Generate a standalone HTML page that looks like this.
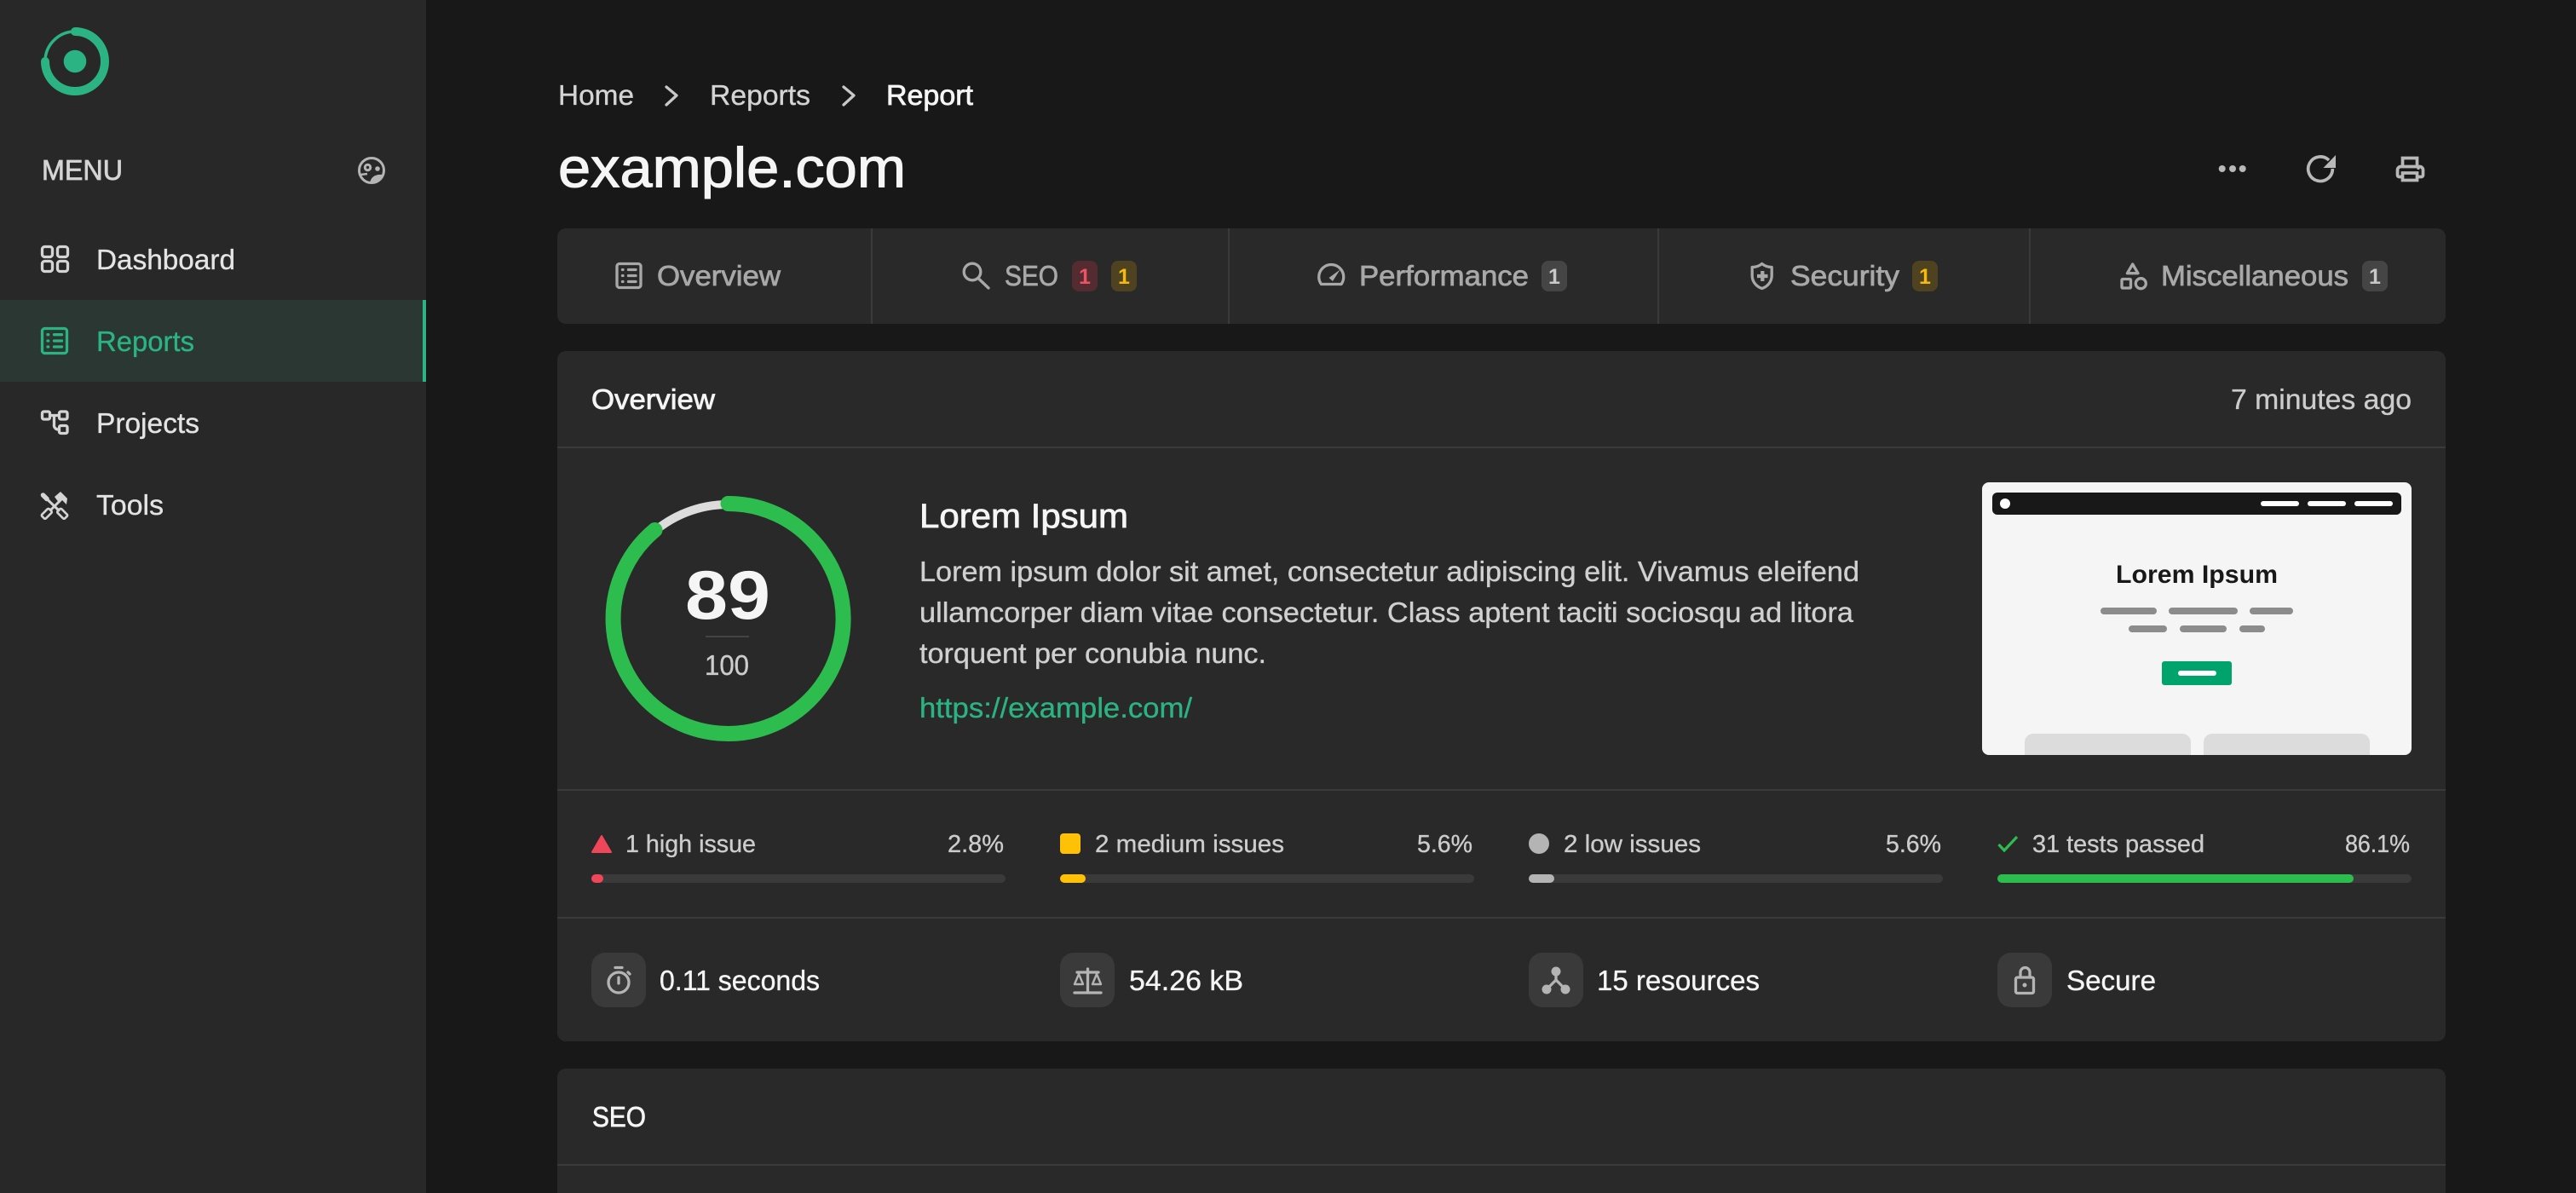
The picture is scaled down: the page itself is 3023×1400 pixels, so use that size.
<!DOCTYPE html>
<html lang="en"><head><meta charset="utf-8"><title>example.com</title>
<style>
html,body{margin:0;padding:0;background:#181818;width:3023px;height:1400px;overflow:hidden}
svg{display:block}
text{font-family:"Liberation Sans",sans-serif;font-size:33px;fill:currentColor;stroke:currentColor;stroke-width:.35px}
text.m{stroke-width:.75px}
text.b{stroke-width:0;font-weight:700}
text.s{font-size:29px}
.i{fill:none;stroke-width:3.3;stroke-linecap:round;stroke-linejoin:round}
</style></head><body>
<svg xmlns="http://www.w3.org/2000/svg" width="3023" height="1400" viewBox="0 0 3023 1400">
<rect width="3023" height="1400" fill="#181818"/>
<!-- Sidebar -->
<rect width="500" height="1400" fill="#282828"/>
<circle cx="88" cy="72" r="13.300" fill="#2bb383"/>
<circle cx="88" cy="72" r="35" fill="none" stroke="#2bb383" stroke-width="3.500"/>
<path d="M88 37A35 35 0 1 1 53 72" fill="none" stroke="#2bb383" stroke-width="10" stroke-linecap="round"/>
<text x="49" y="211" textLength="95" lengthAdjust="spacingAndGlyphs" color="#d4d4d4" class="m">MENU</text>
<g fill="none" stroke="#b4b4b4" stroke-width="3"><circle cx="436" cy="200" r="14.500"/><circle cx="431.500" cy="196.500" r="3.200"/></g>
<circle cx="443" cy="198" r="2.800" fill="#b4b4b4"/><path d="M434 215C435 208 440 204 449 205C449 210 444 215 434 215Z" fill="#b4b4b4"/><path d="M423 205L431 204" stroke="#b4b4b4" stroke-width="2.500"/>
<rect y="352" width="500" height="96" fill="#2a3733"/><rect x="496" y="352" width="4" height="96" fill="#2bb383"/>
<g class="i" stroke="#d4d4d4">
<rect x="49.500" y="289.500" width="12" height="12" rx="3"/><rect x="67.500" y="289.500" width="12" height="12" rx="3"/><rect x="49.500" y="306.500" width="12" height="12" rx="3"/><rect x="67.500" y="306.500" width="12" height="12" rx="3"/>
<rect x="49.500" y="483" width="9" height="9" rx="2"/><rect x="69.500" y="483" width="9.500" height="9" rx="2"/><rect x="69.500" y="499.500" width="9.500" height="9" rx="2"/><path d="M59 487.500H69M63.500 487.500V498A5 5 0 0 0 69 504"/>
</g>
<g class="i" stroke="#2bb383"><rect x="49.500" y="385.500" width="29" height="29" rx="3"/><path d="M63.500 392.700H72.500M63.500 400H72.500M63.500 407H72.500M56 392.700H56.700M56 400H56.700M56 407H56.700"/></g>
<g fill="none" stroke="#d4d4d4" stroke-linecap="round" stroke-linejoin="round">
<path d="M50.500 581L55 585.500" stroke-width="5.500"/><path d="M55 585.500L69 599" stroke-width="3"/><path d="M60 598L70 588" stroke-width="3"/>
<rect x="49" y="599.500" width="12" height="6.500" rx="1.500" transform="rotate(-45 55 603)" stroke-width="2.600"/>
<rect x="67" y="599.500" width="12" height="6.500" rx="1.500" transform="rotate(45 73 603)" stroke-width="2.600"/>
</g>
<path d="M64 583L71 577L79 585L78 592L73 587L69.500 590.500Z" fill="#d4d4d4"/>
<text x="113" y="316" textLength="163" lengthAdjust="spacingAndGlyphs" color="#e4e4e4">Dashboard</text>
<text x="113" y="412" textLength="115" lengthAdjust="spacingAndGlyphs" color="#2bb383">Reports</text>
<text x="113" y="508" textLength="121" lengthAdjust="spacingAndGlyphs" color="#e4e4e4">Projects</text>
<text x="113" y="604" textLength="79" lengthAdjust="spacingAndGlyphs" color="#e4e4e4">Tools</text>
<!-- Header -->
<text x="655" y="123" textLength="89" lengthAdjust="spacingAndGlyphs" color="#d4d4d4">Home</text>
<path d="M782 102L794 112L782 123" fill="none" stroke="#c8c8c8" stroke-width="3.300" stroke-linecap="round" stroke-linejoin="round"/>
<text x="833" y="123" textLength="118" lengthAdjust="spacingAndGlyphs" color="#d4d4d4">Reports</text>
<path d="M990 102L1002 112L990 123" fill="none" stroke="#c8c8c8" stroke-width="3.300" stroke-linecap="round" stroke-linejoin="round"/>
<text x="1040" y="123" textLength="102" lengthAdjust="spacingAndGlyphs" color="#f5f5f5" class="m">Report</text>
<text x="655" y="219.500" textLength="408" lengthAdjust="spacingAndGlyphs" style="font-size:66px;stroke-width:1.1px" color="#f5f5f5">example.com</text>
<g fill="#b8b8b8"><circle cx="2607.700" cy="198" r="4"/><circle cx="2620" cy="198" r="4"/><circle cx="2631.700" cy="198" r="4"/><path d="M2741 182V197H2726.500Z"/><circle cx="2838" cy="197.300" r="1.800"/></g>
<g fill="none" stroke="#b8b8b8" stroke-width="3.700"><path d="M2737.300 198A14.300 14.300 0 1 1 2733 188"/><path d="M2819 207.500H2815.500A2 2 0 0 1 2813.500 205.500V199.500A4 4 0 0 1 2817.500 195.500H2839.500A4 4 0 0 1 2843.500 199.500V205.500A2 2 0 0 1 2841.500 207.500H2838M2819.500 195V185.500H2836.500V195"/><rect x="2819.500" y="203" width="17" height="8.500"/></g>
<!-- Tabs -->
<rect x="654" y="268" width="2216" height="112" rx="10" fill="#292929"/>
<g fill="#3a3a3a"><rect x="1022" y="268" width="2" height="112"/><rect x="1441" y="268" width="2" height="112"/><rect x="1945" y="268" width="2" height="112"/><rect x="2381" y="268" width="2" height="112"/></g>
<g class="i" stroke="#a8a8a8">
<rect x="724" y="309.500" width="28" height="28" rx="3"/><path d="M737.500 316.500H746M737.500 323.500H746M737.500 330.500H746M730.500 316.500H731M730.500 323.500H731M730.500 330.500H731"/>
<circle cx="1141" cy="319" r="9.800"/><path d="M1149 327.500L1160 338"/>
<path d="M1550.500 333.500A14.500 14.500 0 1 1 1574 333.500Z"/>
<path d="M2067.700 309.500C2070.700 312 2075.200 313.500 2079.200 313.500V323.500C2079.200 330.500 2074.200 336.500 2067.700 338.500C2061.200 336.500 2056.200 330.500 2056.200 323.500V313.500C2060.200 313.500 2064.700 312 2067.700 309.500Z"/>
<path d="M2502.700 310L2509 320.700H2496.400Z"/><rect x="2490" y="327.500" width="10.500" height="10.500" rx="1"/><circle cx="2512.300" cy="332.700" r="6"/>
</g>
<path d="M1572.500 316.500L1564 330L1559.500 326Z" fill="#a8a8a8"/>
<path d="M2062 324H2074.500M2068.300 318V330" stroke="#a8a8a8" stroke-width="4.300" fill="none"/>
<g color="#a8a8a8">
<text x="771" y="335" textLength="145" lengthAdjust="spacingAndGlyphs" class="m">Overview</text>
<text x="1179" y="335" textLength="63" lengthAdjust="spacingAndGlyphs" class="m">SEO</text>
<text x="1595" y="335" textLength="199" lengthAdjust="spacingAndGlyphs" class="m">Performance</text>
<text x="2101" y="335" textLength="128" lengthAdjust="spacingAndGlyphs" class="m">Security</text>
<text x="2536" y="335" textLength="220" lengthAdjust="spacingAndGlyphs" class="m">Miscellaneous</text>
</g>
<rect x="1258" y="306" width="30" height="36" rx="8" fill="#532b30"/><text x="1273" y="333" text-anchor="middle" class="b" style="font-size:25px" color="#ea5464">1</text>
<rect x="1304" y="306" width="30" height="36" rx="8" fill="#4f4220"/><text x="1319" y="333" text-anchor="middle" class="b" style="font-size:25px" color="#f5ba0c">1</text>
<rect x="1809" y="306" width="30" height="36" rx="8" fill="#454545"/><text x="1824" y="333" text-anchor="middle" class="b" style="font-size:25px" color="#c8c8c8">1</text>
<rect x="2244" y="306" width="30" height="36" rx="8" fill="#4f4220"/><text x="2259" y="333" text-anchor="middle" class="b" style="font-size:25px" color="#f5ba0c">1</text>
<rect x="2772" y="306" width="30" height="36" rx="8" fill="#454545"/><text x="2787" y="333" text-anchor="middle" class="b" style="font-size:25px" color="#c8c8c8">1</text>
<!-- Overview card -->
<rect x="654" y="412" width="2216" height="810" rx="10" fill="#292929"/>
<g fill="#3a3a3a"><rect x="654" y="524" width="2216" height="2"/><rect x="654" y="926" width="2216" height="2"/><rect x="654" y="1076" width="2216" height="2"/></g>
<text x="694" y="480" textLength="145" lengthAdjust="spacingAndGlyphs" color="#f5f5f5" class="m">Overview</text>
<text x="2618" y="480" textLength="212" lengthAdjust="spacingAndGlyphs" color="#cccccc">7 minutes ago</text>
<circle cx="854.500" cy="726" r="134" fill="none" stroke="#dcdcdc" stroke-width="10"/>
<path d="M854.500 591A135 135 0 1 1 768.500 622" fill="none" stroke="#2dbd4e" stroke-width="18" stroke-linecap="round"/>
<text x="804" y="726" textLength="100" lengthAdjust="spacingAndGlyphs" class="b" style="font-size:81px" color="#f5f5f5">89</text>
<rect x="828" y="746" width="51" height="2" fill="#444"/>
<text x="827" y="792" textLength="52" lengthAdjust="spacingAndGlyphs" color="#cccccc">100</text>
<text x="1079" y="619" textLength="245" lengthAdjust="spacingAndGlyphs" style="font-size:40px;stroke-width:.8px" color="#f5f5f5">Lorem Ipsum</text>
<g color="#d0d0d0">
<text x="1079" y="682" textLength="1103" lengthAdjust="spacingAndGlyphs">Lorem ipsum dolor sit amet, consectetur adipiscing elit. Vivamus eleifend</text>
<text x="1079" y="730" textLength="1096" lengthAdjust="spacingAndGlyphs">ullamcorper diam vitae consectetur. Class aptent taciti sociosqu ad litora</text>
<text x="1079" y="778" textLength="407" lengthAdjust="spacingAndGlyphs">torquent per conubia nunc.</text>
</g>
<text x="1079" y="842" textLength="320" lengthAdjust="spacingAndGlyphs" color="#2bb383">https://example.com/</text>
<!-- Thumbnail -->
<rect x="2326" y="566" width="504" height="320" rx="8" fill="#f5f5f5"/>
<rect x="2338" y="578" width="480" height="26" rx="6" fill="#181818"/>
<circle cx="2353" cy="591" r="6" fill="#fff"/>
<g fill="#fff"><rect x="2653" y="588" width="45" height="6" rx="3"/><rect x="2708" y="588" width="45" height="6" rx="3"/><rect x="2763" y="588" width="45" height="6" rx="3"/></g>
<text x="2483" y="684" textLength="190" lengthAdjust="spacingAndGlyphs" class="b" style="font-size:29.500px" color="#181818">Lorem Ipsum</text>
<g fill="#8c8c8c"><rect x="2465" y="713" width="66" height="8" rx="4"/><rect x="2545" y="713" width="81" height="8" rx="4"/><rect x="2640" y="713" width="51" height="8" rx="4"/><rect x="2498" y="734" width="45" height="8" rx="4"/><rect x="2558" y="734" width="55" height="8" rx="4"/><rect x="2628" y="734" width="30" height="8" rx="4"/></g>
<rect x="2537" y="776" width="82" height="28" rx="3" fill="#00a36c"/><rect x="2556" y="787" width="45" height="6" rx="3" fill="#fff"/>
<path d="M2376 886V871A10 10 0 0 1 2386 861H2561A10 10 0 0 1 2571 871V886ZM2586 886V871A10 10 0 0 1 2596 861H2771A10 10 0 0 1 2781 871V886Z" fill="#dcdcdc"/>
<!-- Issue stats -->
<path d="M706 981L717 1000H695Z" fill="#f0465a" stroke="#f0465a" stroke-width="2" stroke-linejoin="round"/>
<rect x="1244" y="978" width="24" height="24" rx="4" fill="#ffc107"/>
<circle cx="1806" cy="990" r="12" fill="#b4b4b4"/>
<path d="M2345.500 991L2352 998L2367 982" fill="none" stroke="#2dbd4e" stroke-width="3.200"/>
<g color="#cccccc">
<text x="734" y="1000" class="s" textLength="153" lengthAdjust="spacingAndGlyphs">1 high issue</text>
<text x="1112" y="1000" class="s" textLength="66" lengthAdjust="spacingAndGlyphs">2.8%</text>
<text x="1285" y="1000" class="s" textLength="222" lengthAdjust="spacingAndGlyphs">2 medium issues</text>
<text x="1663" y="1000" class="s" textLength="65" lengthAdjust="spacingAndGlyphs">5.6%</text>
<text x="1835" y="1000" class="s" textLength="161" lengthAdjust="spacingAndGlyphs">2 low issues</text>
<text x="2213" y="1000" class="s" textLength="65" lengthAdjust="spacingAndGlyphs">5.6%</text>
<text x="2385" y="1000" class="s" textLength="202" lengthAdjust="spacingAndGlyphs">31 tests passed</text>
<text x="2752" y="1000" class="s" textLength="76" lengthAdjust="spacingAndGlyphs">86.1%</text>
</g>
<g fill="#3a3a3a"><rect x="694" y="1026" width="486" height="10" rx="5"/><rect x="1244" y="1026" width="486" height="10" rx="5"/><rect x="1794" y="1026" width="486" height="10" rx="5"/><rect x="2344" y="1026" width="486" height="10" rx="5"/></g>
<rect x="694" y="1026" width="14" height="10" rx="5" fill="#f0465a"/><rect x="1244" y="1026" width="30" height="10" rx="5" fill="#ffc107"/><rect x="1794" y="1026" width="30" height="10" rx="5" fill="#b4b4b4"/><rect x="2344" y="1026" width="418" height="10" rx="5" fill="#2dbd4e"/>
<!-- Metrics -->
<g fill="#3a3a3a"><rect x="694" y="1118" width="64" height="64" rx="16"/><rect x="1244" y="1118" width="64" height="64" rx="16"/><rect x="1794" y="1118" width="64" height="64" rx="16"/><rect x="2344" y="1118" width="64" height="64" rx="16"/></g>
<g class="i" stroke="#b4b4b4">
<circle cx="726" cy="1153" r="12"/><path d="M722 1135.500H730M726 1147V1154M737 1141L739 1143"/>
<path d="M1261 1165H1292M1276.500 1137V1165M1264 1141H1289"/>
<path d="M1266 1143L1261 1155H1271ZM1287 1143L1282 1155H1292Z" stroke-width="2.400"/>
<path d="M1826 1140V1150L1815 1161M1826 1150L1837 1161"/>
<rect x="2365.500" y="1147" width="21" height="18.500" rx="2"/><path d="M2371 1147V1141A5.500 5.500 0 0 1 2382 1141V1147"/>
</g>
<g fill="#b4b4b4"><circle cx="1826" cy="1140" r="5.500"/><circle cx="1815" cy="1161" r="5.500"/><circle cx="1837" cy="1161" r="5.500"/><circle cx="2376" cy="1156" r="2.500"/></g>
<g color="#f5f5f5">
<text x="774" y="1162" textLength="188" lengthAdjust="spacingAndGlyphs">0.11 seconds</text>
<text x="1325" y="1162" textLength="134" lengthAdjust="spacingAndGlyphs">54.26 kB</text>
<text x="1874" y="1162" textLength="191" lengthAdjust="spacingAndGlyphs">15 resources</text>
<text x="2425" y="1162" textLength="105" lengthAdjust="spacingAndGlyphs">Secure</text>
</g>
<!-- SEO card -->
<path d="M654 1400V1264A10 10 0 0 1 664 1254H2860A10 10 0 0 1 2870 1264V1400Z" fill="#292929"/>
<rect x="654" y="1366" width="2216" height="2" fill="#3a3a3a"/>
<text x="695" y="1322" textLength="63" lengthAdjust="spacingAndGlyphs" color="#f5f5f5" class="m">SEO</text>
</svg>
</body></html>
